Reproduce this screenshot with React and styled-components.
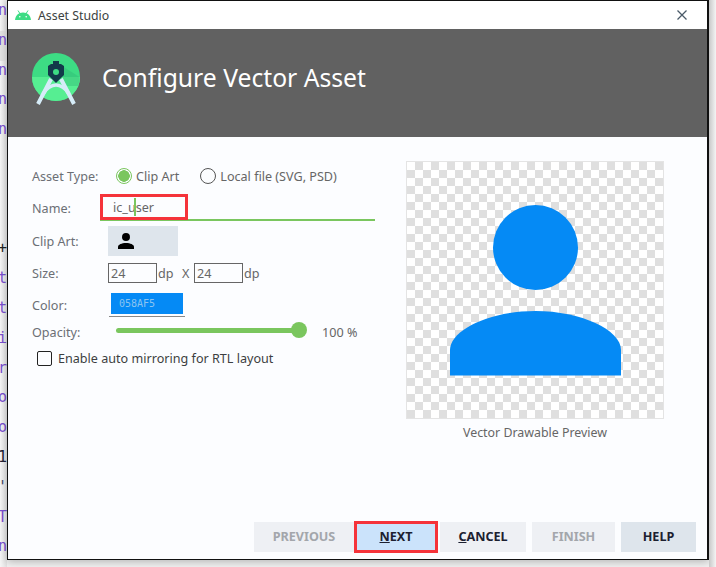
import React from "react";
import styled, { createGlobalStyle } from "styled-components";

const Global = createGlobalStyle`
  html, body { margin: 0; padding: 0; background: #f0f0f0; }
  * { box-sizing: border-box; }
`;
const UI = `"Noto Sans", "Open Sans", sans-serif`;

const Desktop = styled.div`
  width: 716px; height: 567px; overflow: hidden; display: flex; align-items: flex-start;
  font-family: ${UI}; background: #f2f2f2;
`;
const Code = styled.div`
  width: 7px; flex: none; overflow: hidden; height: 567px;
  background: linear-gradient(90deg, #f6f6f6 0, #e2e2e2 100%);
  display: flex; flex-direction: column; padding-top: 1px;
`;
const CodeLine = styled.div`
  height: 30px; line-height: 18px; font-size: 15px; white-space: nowrap;
  font-family: "DejaVu Sans Mono", monospace; color: ${p => p.$c || "#7a4fd0"};
  text-indent: -2px; background: ${p => p.$band ? "#e4e4e4" : "transparent"};
`;
const Win = styled.div`
  width: 702px; height: 560px; flex: none; background: #fcfdff;
  border-style: solid; border-color: #111; border-width: 1px 2px 1px 1px; box-shadow: 0 2px 8px rgba(0,0,0,.25);
  display: flex; flex-direction: column;
`;
const TitleBar = styled.div`
  height: 28px; flex: none; display: flex; align-items: center; padding: 0 20px 0 7px;
  background: #fff; font-size: 12.3px; color: #3c3f41;
`;
const TitleText = styled.span`margin-left: 7px; flex: 1;`;
const Banner = styled.div`
  height: 108px; flex: none; background: #616161; display: flex; align-items: flex-start;
  padding: 24px 0 0 24px; color: #fff; font-size: 24.7px;
`;
const BannerText = styled.div`margin: 7px 0 0 22px; line-height: 36px;`;
const Body = styled.div`
  flex: 1; display: flex; padding: 24px 43px 0 24px; justify-content: space-between;
`;
const Form = styled.div`width: 343px; display: flex; flex-direction: column; font-size: 12.6px; color: #666;`;
const Row = styled.div`
  display: flex; align-items: center; height: ${p => p.$h}px; margin-top: ${p => p.$mt || 0}px; position: relative;
`;
const Label = styled.div`width: 76px; flex: none; color: #6b6f75;`;
const Radio = styled.span`
  width: 16px; height: 16px; border-radius: 50%; flex: none; margin: 0 4px 0 ${p => p.$ml}px;
  border: 1px solid ${p => p.$on ? "#7ac65e" : "#555"};
  background: ${p => p.$on ? "radial-gradient(circle, #7ac65e 0 5.5px, transparent 6px)" : "transparent"};
`;
const NameField = styled.div`
  flex: 1; height: 25px; margin-left: -8px; position: relative; border-bottom: 2px solid #7ac65e;
  padding: 4px 0 0 13px; color: #666; line-height: 16px;
`;
const Caret = styled.span`
  position: absolute; left: 34px; top: 2px; width: 2px; height: 18px; background: #7ac65e;
`;
const RedBox = styled.div`
  position: absolute; left: 0; top: -2px; width: 88px; height: 26px; border: 3px solid #f5333a;
`;
const ClipBtn = styled.div`
  width: 70px; height: 30px; background: #dee5ec; display: flex; align-items: center; padding-left: 10px;
`;
const NumBox = styled.div`
  width: 49px; height: 20px; border: 1px solid #666; padding-left: 2px; line-height: 19px; background: #fcfdff;
`;
const Unit = styled.span`width: ${p => p.$w}px; padding-left: 1px; flex: none;`;
const TimesMark = styled.span`width: 12px; flex: none;`;
const ColorWrap = styled.div`
  width: 76px; height: 24px; padding: 0 2px; border-bottom: 1px solid #888; margin-left: 1px;
`;
const ColorBox = styled.div`
  width: 72px; height: 21px; background: #058af5; color: #8cc4f0; font: 10px/21px "DejaVu Sans Mono", monospace; padding-left: 8px;
`;
const Slider = styled.div`
  width: 183px; height: 5px; border-radius: 2.5px; background: #7ac65e; margin: -3px 0 0 8px; position: relative;
`;
const Thumb = styled.span`
  position: absolute; right: -8px; top: -6px; width: 16px; height: 16px; border-radius: 50%; background: #7ac65e;
`;
const Percent = styled.span`margin-left: 23px;`;
const Checkbox = styled.span`
  width: 15px; height: 15px; border: 1px solid #222; border-radius: 2px; margin: 0 6px 0 5px; flex: none;
`;
const CheckText = styled.span`color: #3c3f41;`;
const PreviewCol = styled.div`
  width: 258px; display: flex; flex-direction: column; align-items: center; font-size: 12.4px; color: #666;
`;
const Checker = styled.div`
  width: 258px; height: 258px; border: 1px solid #e4e4e4; padding: 43px;
  background-color: #fff;
  background-image: conic-gradient(#dfdfdf 25%, #fff 0 50%, #dfdfdf 0 75%, #fff 0);
  background-size: 16px 16px;
`;
const Caption = styled.div`margin-top: 5px;`;
const Footer = styled.div`
  height: 39px; flex: none; margin-bottom: 3px; padding-left: 246px; display: flex; align-items: center;
  font-size: 12.6px; font-weight: 700;
`;
const Btn = styled.div`
  width: ${p => p.$w}px; height: 30px; margin-right: ${p => p.$mr || 0}px; flex: none; display: flex; align-items: center; justify-content: center;
  background: ${p => p.$bg || "#eef0f4"}; color: ${p => p.$off ? "#a3a6ab" : "#1c2030"};
`;
const NextBtn = styled(Btn)`
  height: 32px; background: #cbe3fb; border: 3px solid #f5333a;
`;
const U = styled.span`text-decoration: underline;`;
const Side = styled.div`flex: 1; height: 567px; background: linear-gradient(90deg,#c8c8c8,#f4f4f4);`;

const lines = [["n:"],["n:"],["n:"],["n:"],["n:"],[""],[""],[""],["+","#222"],["t_"],["t_"],["i."],["r"],["o"],["o"],["1(","#223"],["'","#446"],["Ty"],["n:"]];

const Android = () => (
  <svg width="16" height="10" viewBox="0 0 16 10">
    <path d="M0 10C.3 5.500 3.500 2.500 8 2.500s7.700 3 8 7.500z" fill="#3ddc84" />
    <path d="M3 .5l2.200 3.500M13 .5l-2.200 3.500" stroke="#3ddc84" strokeWidth="1" />
    <circle cx="4.800" cy="6.800" r=".8" fill="#fff" /><circle cx="11.200" cy="6.800" r=".8" fill="#fff" />
  </svg>
);
const Logo = () => (
  <svg width="48" height="52" viewBox="0 0 48 52" style={{ flex: "none" }}>
    <circle cx="24" cy="24" r="24" fill="#3ddc84" />
    <path d="M0 24a24 24 0 0 0 48 0z" fill="#56ee92" />
    <path d="M30 13L47.500 24A24 24 0 0 1 46 33L32 33z" fill="#2fb573" opacity=".4" />
    <path d="M6 51L19 26M42 51L29 26" stroke="#d6ecf8" strokeWidth="4" fill="none" />
    <path d="M11 41C14 35 20 32 24 32s10 3 13 9" stroke="#d6ecf8" strokeWidth="3.500" fill="none" />
    <path d="M21 8h6v3h2l3 2v9l-8 8-8-8v-9l3-2h2z" fill="#123a4a" />
    <circle cx="24" cy="19" r="3" fill="#3ddc84" />
  </svg>
);
const Close = () => (
  <svg width="10" height="10" viewBox="0 0 10 10"><path d="M.5.5l9 9M9.500.5l-9 9" stroke="#4a5a68" strokeWidth="1.300" /></svg>
);
const Person = ({ size, fill }) => (
  <svg width={size} height={size} viewBox="0 0 171 171" style={{ display: "block" }}>
    <circle cx="85.500" cy="42.500" r="42.500" fill={fill} />
    <path d="M0 170.500V145C0 125 40 106 85.500 106S171 125 171 145V170.500z" fill={fill} />
  </svg>
);

export default function App() {
  return (
    <Desktop>
      <Global />
      <Code>{lines.map(([t, c], i) => <CodeLine key={i} $c={c} $band={i === 1}>{t}</CodeLine>)}</Code>
      <Win>
        <TitleBar><Android /><TitleText>Asset Studio</TitleText><Close /></TitleBar>
        <Banner><Logo /><BannerText>Configure Vector Asset</BannerText></Banner>
        <Body>
          <Form>
            <Row $h={30}>
              <Label>Asset Type:</Label>
              <Radio $on $ml={8} />Clip Art
              <Radio $ml={21} />Local file (SVG, PSD)
            </Row>
            <Row $h={26} $mt={4}>
              <Label>Name:</Label>
              <NameField>ic_user<Caret /><RedBox /></NameField>
            </Row>
            <Row $h={30} $mt={5}>
              <Label>Clip Art:</Label>
              <ClipBtn><Person size={16} fill="#000" /></ClipBtn>
            </Row>
            <Row $h={20} $mt={7}>
              <Label>Size:</Label>
              <NumBox>24</NumBox><Unit $w={25}>dp</Unit><TimesMark>X</TimesMark><NumBox>24</NumBox><Unit $w={25}>dp</Unit>
            </Row>
            <Row $h={24} $mt={10}>
              <Label>Color:</Label>
              <ColorWrap><ColorBox>058AF5</ColorBox></ColorWrap>
            </Row>
            <Row $h={16} $mt={7}>
              <Label>Opacity:</Label>
              <Slider><Thumb /></Slider>
              <Percent>100 %</Percent>
            </Row>
            <Row $h={18} $mt={9}>
              <Checkbox /><CheckText>Enable auto mirroring for RTL layout</CheckText>
            </Row>
          </Form>
          <PreviewCol>
            <Checker>
              <Person size={171} fill="#058af5" />
            </Checker>
            <Caption>Vector Drawable Preview</Caption>
          </PreviewCol>
        </Body>
        <Footer>
          <Btn $w={100} $off>PREVIOUS</Btn>
          <NextBtn $w={84} $mr={2}><span><U>N</U>EXT</span></NextBtn>
          <Btn $w={86} $mr={6}><span><U>C</U>ANCEL</span></Btn>
          <Btn $w={83} $mr={6} $off>FINISH</Btn>
          <Btn $w={75} $bg="#dee5ec">HELP</Btn>
        </Footer>
      </Win>
      <Side />
    </Desktop>
  );
}
